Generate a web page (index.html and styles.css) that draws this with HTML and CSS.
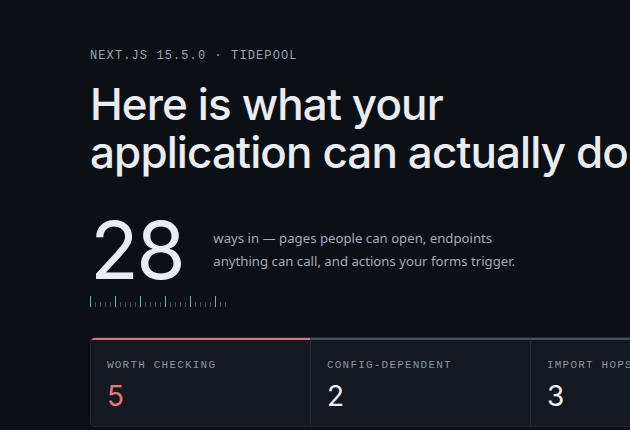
FILE: index.html
```html
<!DOCTYPE html>
<html lang="en">
<head>
<meta charset="utf-8">
<title>Tidepool</title>
<link rel="stylesheet" href="styles.css">
</head>
<body>
<main class="page">
  <p class="eyebrow">NEXT.JS 15.5.0 · TIDEPOOL</p>
  <h1 class="title">Here is what your<br>application can actually do</h1>
  <section class="stat">
    <div class="stat-num">28</div>
    <p class="stat-desc">ways in — pages people can open, endpoints<br>anything can call, and actions your forms trigger.</p>
  </section>
  <div class="ticks">
    <span class="tick major"></span><span class="tick"></span><span class="tick"></span><span class="tick"></span><span class="tick"></span>
    <span class="tick major"></span><span class="tick"></span><span class="tick"></span><span class="tick"></span><span class="tick"></span>
    <span class="tick major"></span><span class="tick"></span><span class="tick"></span><span class="tick"></span><span class="tick"></span>
    <span class="tick major"></span><span class="tick"></span><span class="tick"></span><span class="tick"></span><span class="tick"></span>
    <span class="tick major"></span><span class="tick"></span><span class="tick"></span><span class="tick"></span><span class="tick"></span>
    <span class="tick major"></span><span class="tick"></span><span class="tick"></span>
  </div>
  <section class="cards">
    <div class="card card-alert">
      <div class="card-label">WORTH CHECKING</div>
      <div class="card-value alert">5</div>
    </div>
    <div class="card">
      <div class="card-label">CONFIG-DEPENDENT</div>
      <div class="card-value">2</div>
    </div>
    <div class="card">
      <div class="card-label">IMPORT HOPS</div>
      <div class="card-value">3</div>
    </div>
    <div class="card">
      <div class="card-label">CLIENT BOUNDARIES</div>
      <div class="card-value">4</div>
    </div>
  </section>
</main>
</body>
</html>
```
FILE: styles.css
```css
html, body {
  margin: 0;
  padding: 0;
  background: #0c0f13;
  overflow: hidden;
}
body {
  width: 630px;
  height: 430px;
}
.page {
  padding: 48px 0 0 90px;
  width: 1000px;
  box-sizing: border-box;
}
.eyebrow {
  margin: 0;
  font-family: "Liberation Mono", "DejaVu Sans Mono", monospace;
  font-size: 12px;
  letter-spacing: 1.1px;
  line-height: 16px;
  color: #9aa6b2;
}
.title {
  margin: 16px 0 0;
  font-family: Inter, "Noto Sans", sans-serif;
  font-weight: 500;
  font-size: 44px;
  line-height: 48px;
  letter-spacing: -0.9px;
  color: #e9ecf0;
  white-space: nowrap;
}
.stat {
  display: flex;
  align-items: center;
  gap: 30px;
  margin-top: 36px;
}
.stat-num {
  font-family: Inter, "Noto Sans", sans-serif;
  font-weight: 400;
  font-size: 80px;
  line-height: 76px;
  letter-spacing: -2.5px;
  color: #e9ecf0;
}
.stat-desc {
  margin: 0;
  font-family: "Noto Sans", "Open Sans", sans-serif;
  font-size: 13.2px;
  line-height: 23px;
  color: #a4adb8;
}
.ticks {
  display: flex;
  align-items: flex-end;
  gap: 4px;
  margin-top: 8px;
  height: 11px;
}
.tick {
  width: 1px;
  height: 5px;
  background: #4a525c;
}
.tick.major {
  height: 11px;
  background: #58b7cb;
}
.cards {
  display: grid;
  grid-template-columns: 219px repeat(3, 220px);
  margin-top: 30px;
  border: 1px solid #242a31;
  border-radius: 5px;
  overflow: hidden;
  background: #141920;
  width: max-content;
}
.card {
  border-top: 2px solid #4b5159;
  border-left: 1px solid #262c33;
  padding: 18px 16px 16px;
  height: 88px;
  box-sizing: border-box;
}
.card:first-child {
  border-left: none;
}
.card-alert {
  border-top-color: #e0717d;
}
.card-label {
  font-family: "Liberation Mono", "DejaVu Sans Mono", monospace;
  font-size: 11px;
  letter-spacing: 1.2px;
  line-height: 14px;
  color: #8d959f;
}
.card-value {
  margin-top: 8px;
  font-family: Inter, "Noto Sans", sans-serif;
  font-size: 28px;
  line-height: 32px;
  color: #eef0f3;
}
.card-value.alert {
  color: #e8747f;
}
```
